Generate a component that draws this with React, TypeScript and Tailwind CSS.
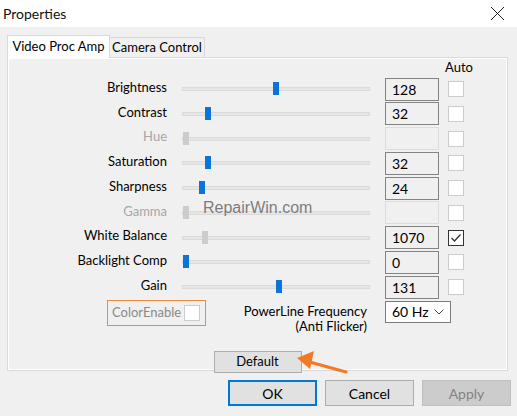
import React from 'react';

interface SliderRow {
  label: string;
  pos: number;
  value: string;
  enabled: boolean;
  thumbOn: boolean;
  auto?: boolean;
}

const rows: SliderRow[] = [
  { label: 'Brightness', pos: 91, value: '128', enabled: true, thumbOn: true },
  { label: 'Contrast', pos: 23, value: '32', enabled: true, thumbOn: true },
  { label: 'Hue', pos: 1, value: '', enabled: false, thumbOn: false },
  { label: 'Saturation', pos: 23, value: '32', enabled: true, thumbOn: true },
  { label: 'Sharpness', pos: 17, value: '24', enabled: true, thumbOn: true },
  { label: 'Gamma', pos: 1, value: '', enabled: false, thumbOn: false },
  { label: 'White Balance', pos: 20, value: '1070', enabled: true, thumbOn: false, auto: true },
  { label: 'Backlight Comp', pos: 1, value: '0', enabled: true, thumbOn: true },
  { label: 'Gain', pos: 94, value: '131', enabled: true, thumbOn: true },
];

const CheckBox: React.FC<{ checked?: boolean }> = ({ checked }) => (
  <div
    className={`w-[16px] h-[16px] bg-white border flex items-center justify-center ${
      checked ? 'border-[#333333]' : 'border-[#cccccc]'
    }`}
  >
    {checked && (
      <svg width="12" height="12" viewBox="0 0 12 12">
        <polyline points="1.5,6 4.5,9 10.5,2.5" fill="none" stroke="#333" strokeWidth="1.3" />
      </svg>
    )}
  </div>
);

const App: React.FC = () => {
  return (
    <div className="relative w-[517px] h-[416px] bg-[#f0f0f0] flex flex-col overflow-hidden text-[13px] text-black font-['Lato',sans-serif]">
      {/* title bar */}
      <div className="h-[27px] bg-white flex items-center justify-between shrink-0">
        <span className="pl-[3px] text-[14px] text-[#111]">Properties</span>
        <svg width="15" height="15" viewBox="0 0 15 15" className="mr-[12px]">
          <path d="M1 1 L14 14 M14 1 L1 14" stroke="#222" strokeWidth="1" />
        </svg>
      </div>

      {/* tabs */}
      <div className="px-[7px] pt-[8px] flex flex-col">
        <div className="flex items-end h-[22px]">
          <div className="h-[23px] w-[103px] bg-white border border-b-0 border-[#d9d9d9] flex items-center justify-center z-10 -mb-px">
            Video Proc Amp
          </div>
          <div className="h-[20px] w-[95px] bg-[#f0f0f0] border border-l-0 border-b-0 border-[#d9d9d9] flex items-center justify-center">
            Camera Control
          </div>
        </div>

        {/* panel */}
        <div className="h-[314px] w-[501px] border border-[#d9d9d9] shadow-[inset_0_0_0_1px_#ffffff] flex flex-col">
          <div className="h-[21px] flex items-center pl-[437px]">Auto</div>

          <div className="flex flex-col gap-[1.75px]">
            {rows.map((r) => (
              <div key={r.label} className="h-[23px] flex items-center">
                <div
                  className={`w-[159px] text-right mb-[3px] ${r.enabled ? 'text-black' : 'text-[#a6a6a6]'}`}
                >
                  {r.label}
                </div>
                <div className="ml-[15px] w-[188px] h-[4px] bg-[#e6e6e6] border border-[#dadada] relative">
                  <div
                    className={`absolute top-[-6px] w-[6px] h-[13px] ${r.thumbOn ? 'bg-[#0a74d8]' : 'bg-[#cccccc]'}`}
                    style={{ left: r.pos - 1 }}
                  />
                </div>
                <div
                  className={`ml-[15px] w-[54px] h-[23px] border flex items-center pl-[6px] text-[14px] ${
                    r.value ? 'border-[#838383]' : 'border-[#dcdcdc]'
                  }`}
                >
                  {r.value}
                </div>
                <div className="ml-[9px]">
                  <CheckBox checked={r.auto} />
                </div>
              </div>
            ))}
          </div>

          {/* color enable / powerline */}
          <div className="mt-[1px] flex items-start">
            <div className="w-[359px] flex items-start justify-between">
              <div className="ml-[99px] w-[99px] h-[26px] border border-[#ee8a3c] flex items-center pl-[4px] gap-[3px] text-[#8a8a8a]">
                <span>ColorEnable</span>
                <CheckBox />
              </div>
              <div className="text-right leading-[15px] pt-[4px]">
                <div>PowerLine Frequency</div>
                <div>(Anti Flicker)</div>
              </div>
            </div>
            <div className="ml-[18px] mt-[1px] w-[66px] h-[22px] bg-white border border-[#7a7a7a] flex items-center justify-between pl-[6px] pr-[6px]">
              <span className="text-[14px]">60 Hz</span>
              <svg width="10" height="6" viewBox="0 0 10 6">
                <polyline points="0.5,0.5 5,5 9.5,0.5" fill="none" stroke="#444" strokeWidth="1" />
              </svg>
            </div>
          </div>

          <div className="mt-[17px] flex justify-center">
            <button className="w-[88px] h-[22px] bg-[#e1e1e1] border border-[#adadad] flex items-center justify-center">
              Default
            </button>
          </div>
        </div>
      </div>

      {/* dialog buttons */}
      <div className="mt-[9px] pr-[6px] flex justify-end gap-[8px]">
        <button className="w-[89px] h-[26px] bg-[#e1e1e1] border-2 border-[#0078d7] flex items-center justify-center text-[14px]">
          OK
        </button>
        <button className="w-[89px] h-[26px] bg-[#e1e1e1] border border-[#adadad] flex items-center justify-center text-[14px]">
          Cancel
        </button>
        <button className="w-[89px] h-[26px] bg-[#cccccc] border border-[#bfbfbf] flex items-center justify-center text-[14px] text-[#838383]">
          Apply
        </button>
      </div>

      {/* watermark */}
      <div className="absolute left-[203px] top-[196px] text-[16px] text-[#7d7d7d] font-['Liberation_Sans',sans-serif] pointer-events-none">
        RepairWin.com
      </div>

      {/* annotation arrow */}
      <svg className="absolute left-0 top-0 pointer-events-none" width="517" height="416" viewBox="0 0 517 416">
        <line x1="346" y1="372" x2="306" y2="361" stroke="#f07a26" strokeWidth="3" strokeLinecap="round" />
        <polygon points="297,358 314,351 310,369" fill="#f07a26" />
      </svg>
    </div>
  );
};

export default App;
